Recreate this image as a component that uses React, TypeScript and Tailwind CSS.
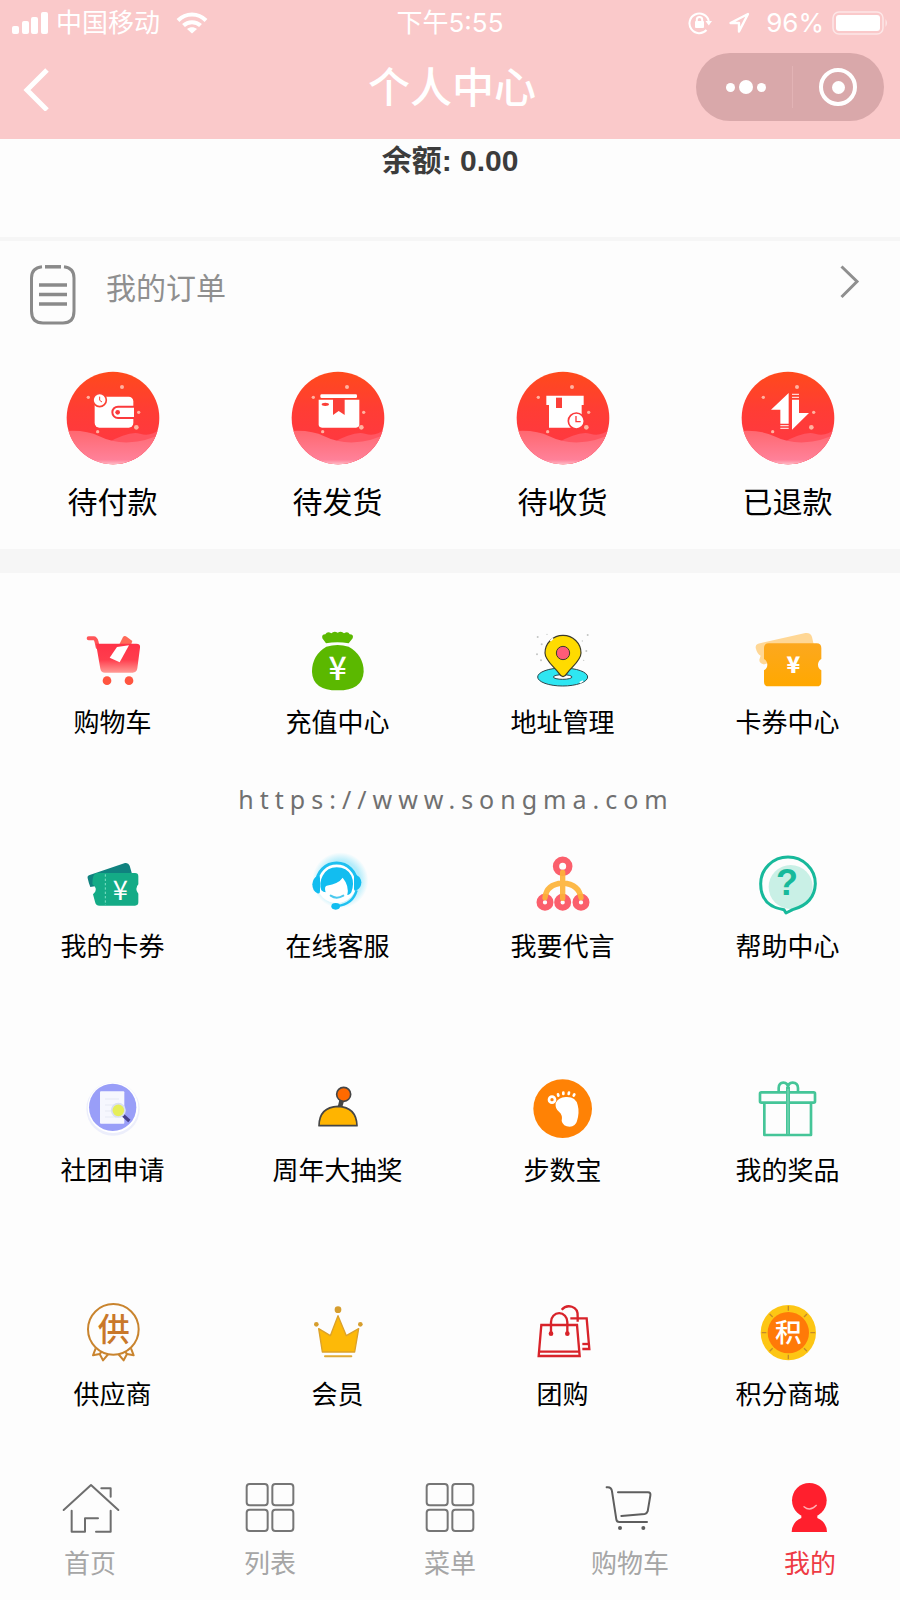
import type { ReactNode } from "react";

type Item = {
  label: string;
  icon: ReactNode;
};

const ICON_FONT = "'Noto Sans CJK SC', 'Noto Sans', sans-serif";

/* ---------- status bar ---------- */

function SignalIcon() {
  return (
    <svg width="36" height="22" viewBox="0 0 36 22" fill="currentColor" aria-hidden="true">
      <rect x="0" y="14" width="7" height="8" rx="2" />
      <rect x="10" y="9" width="7" height="13" rx="2" />
      <rect x="19" y="5" width="7" height="17" rx="2" />
      <rect x="29" y="0" width="7" height="22" rx="2" />
    </svg>
  );
}

function WifiIcon() {
  return (
    <svg width="32" height="22" viewBox="0 0 32 22" fill="none" stroke="currentColor" strokeWidth="4" aria-hidden="true">
      <path d="M2 8.500C10 0.500 22 0.500 30 8.500" />
      <path d="M7.500 13.500C12 9 20 9 24.500 13.500" />
      <path d="M11 17C14 14.500 18 14.500 21 17L16 21.500Z" fill="currentColor" stroke="none" />
    </svg>
  );
}

function RotationLockIcon() {
  return (
    <svg width="24" height="24" viewBox="0 0 24 24" fill="none" stroke="currentColor" strokeWidth="2" aria-hidden="true">
      <path d="M18.500 19A9.800 9.800 0 1 1 20.800 10" />
      <path d="M17.500 10H24L20.800 14.500Z" fill="currentColor" stroke="none" />
      <rect x="7" y="10" width="9" height="7" rx="1" fill="currentColor" stroke="none" />
      <path d="M8.800 11V8.600a2.700 2.700 0 0 1 5.400 0V11" />
    </svg>
  );
}

function LocationIcon() {
  return (
    <svg width="22" height="22" viewBox="0 0 22 22" fill="none" stroke="currentColor" strokeWidth="2.400" strokeLinejoin="round" aria-hidden="true">
      <path d="M20 2L2.500 11H11V19.500Z" />
    </svg>
  );
}

function BatteryIcon() {
  return (
    <svg width="56" height="24" viewBox="0 0 56 24" fill="none" aria-hidden="true">
      <rect x="1" y="1" width="50" height="22" rx="6" stroke="#fff" strokeOpacity="0.550" strokeWidth="1.500" />
      <rect x="4" y="4" width="44" height="16" rx="3" fill="#fff" />
      <path d="M53.500 8q3 4 0 8z" fill="#fff" fillOpacity="0.550" />
    </svg>
  );
}

/* ---------- order status icons ---------- */

function OrderBadge({ id, children }: { id: string; children: ReactNode }) {
  return (
    <svg width="94" height="94" viewBox="0 0 282 282" aria-hidden="true">
      <defs>
        <linearGradient id={`${id}-bg`} x1="0" y1="0" x2="0" y2="1">
          <stop offset="0" stopColor="#ff4a1c" />
          <stop offset="0.400" stopColor="#ff3d34" />
          <stop offset="1" stopColor="#ff3548" />
        </linearGradient>
        <linearGradient id={`${id}-wave`} x1="0" y1="0" x2="0" y2="1">
          <stop offset="0" stopColor="#ff6870" />
          <stop offset="0.850" stopColor="#ff8199" />
          <stop offset="1" stopColor="#ffc4cd" />
        </linearGradient>
        <clipPath id={`${id}-clip`}>
          <circle cx="141" cy="141" r="139" />
        </clipPath>
      </defs>
      <circle cx="141" cy="141" r="139" fill={`url(#${id}-bg)`} />
      <g clipPath={`url(#${id}-clip)`}>
        <path d="M120 218Q190 178 222 188T282 174V282H120Z" fill="#ff5561" />
        <path d="M0 180Q60 176 100 196T190 214Q240 212 282 190V282H0Z" fill={`url(#${id}-wave)`} />
      </g>
      <g fill="#ffb3a0">
        <circle cx="168" cy="48" r="6" />
        <circle cx="67" cy="79" r="5" />
        <circle cx="218" cy="124" r="5" />
        <circle cx="211" cy="169" r="7" />
        <circle cx="95" cy="182" r="5" />
      </g>
      {children}
    </svg>
  );
}

function WalletBadge() {
  return (
    <OrderBadge id="wallet">
      <rect x="86" y="77" width="116" height="93" rx="14" fill="#fff" />
      <path d="M204 107H156a17 17 0 0 0 0 34H204" fill="#fff" stroke="#fb3a3c" strokeWidth="6" />
      <circle cx="155" cy="124" r="7" fill="#fb3a3c" />
      <circle cx="101" cy="87" r="20" fill="#fff" stroke="#fb4434" strokeWidth="5" />
      <path d="M101 77V88L108 93" fill="none" stroke="#fb4434" strokeWidth="3" />
    </OrderBadge>
  );
}

function PackageBadge() {
  return (
    <OrderBadge id="package">
      <rect x="88" y="70" width="110" height="11" rx="4" fill="#fff" />
      <path d="M83 86H205V160a10 10 0 0 1-10 10H93a10 10 0 0 1-10-10Z" fill="#fff" />
      <path d="M126 84H161V132L143 120L126 132Z" fill="#fb3f38" />
      <ellipse cx="103" cy="100" rx="11" ry="5" fill="#fb3f38" />
    </OrderBadge>
  );
}

function ReceiveBadge() {
  return (
    <OrderBadge id="receive">
      <path d="M91 74H203V102H197V170H99V102H91Z" fill="#fff" />
      <rect x="120" y="80" width="18" height="31" fill="#fb3f38" />
      <circle cx="181" cy="150" r="24" fill="#fff" stroke="#fb3a3c" strokeWidth="5" />
      <path d="M180 135V152H194" fill="none" stroke="#fb3a3c" strokeWidth="4" />
    </OrderBadge>
  );
}

function RefundBadge() {
  return (
    <OrderBadge id="refund">
      <g fill="#fff">
        <path d="M143 66V158H118V116H90Z" />
        <path d="M153 176V86H174V126H204Z" />
      </g>
      <g stroke="#fff" strokeWidth="4" opacity="0.800">
        <path d="M118 164H143M118 172H143M153 70H174M153 79H174" />
      </g>
    </OrderBadge>
  );
}

/* ---------- service icons ---------- */

function ServiceSvg({ children }: { children: ReactNode }) {
  return (
    <svg className="overflow-visible" width="60" height="60" viewBox="0 0 180 180" fill="none" aria-hidden="true">
      {children}
    </svg>
  );
}

function CartIcon() {
  return (
    <ServiceSvg>
      <defs>
        <linearGradient id="cart-body" x1="0" y1="0" x2="0" y2="1">
          <stop offset="0" stopColor="#ff3247" />
          <stop offset="0.550" stopColor="#ff3d4d" />
          <stop offset="1" stopColor="#ff9a95" />
        </linearGradient>
      </defs>
      <path d="M108 42L120 18Q125 12 132 18L148 30L144 42Z" fill="#ff6a58" />
      <path d="M17 22H32Q38 22 41 34L44 48" stroke="#ff5558" strokeWidth="12" strokeLinecap="round" />
      <path d="M39 38H160Q173 38 171 50L163 112Q161 125 149 125H66Q54 125 52 113Z" fill="url(#cart-body)" />
      <path d="M102 48L138 43L110 94L80 80Z" fill="#fff" />
      <circle cx="72" cy="149" r="13" fill="#ff5540" />
      <circle cx="138" cy="149" r="13" fill="#ff5540" />
    </ServiceSvg>
  );
}

function MoneyBagIcon() {
  return (
    <ServiceSvg>
      <path d="M54 37L43 22Q40 10 52 10Q58 0 70 7Q78 -2 89 5Q100 -2 108 7Q120 0 125 10Q138 10 134 22L122 37Q88 30 54 37Z" fill="#5bb800" />
      <path d="M55 47Q89 37 122 47Q167 72 167 122Q164 178 89 178Q14 178 12 122Q12 72 55 47Z" fill="#5bb800" />
      <text x="89" y="147" textAnchor="middle" fontSize="96" fontWeight="500" fontFamily={ICON_FONT} fill="#fff">¥</text>
    </ServiceSvg>
  );
}

function AddressIcon() {
  return (
    <ServiceSvg>
      <g fill="#c3c6c4">
        <circle cx="14" cy="18" r="3" />
        <circle cx="42" cy="10" r="2" />
        <circle cx="26" cy="40" r="3" />
        <circle cx="12" cy="70" r="3" />
        <circle cx="24" cy="88" r="3" />
        <circle cx="164" cy="12" r="3" />
        <circle cx="148" cy="30" r="2" />
        <circle cx="160" cy="60" r="3" />
        <circle cx="152" cy="88" r="2" />
      </g>
      <ellipse cx="89" cy="138" rx="75" ry="27" fill="#2ee6f2" stroke="#29464c" strokeWidth="3" />
      <ellipse cx="89" cy="138" rx="28" ry="7" fill="#fff" stroke="#29464c" strokeWidth="3" />
      <path d="M90 137Q84 137 78 127C62 106 36 88 36 66A54 53 0 0 1 144 66C144 88 118 106 102 127Q96 137 90 137Z" fill="#ffdb00" stroke="#3b3a28" strokeWidth="3.500" />
      <circle cx="90" cy="66" r="20" fill="#ff5c78" stroke="#3b3a28" strokeWidth="3" />
      <path d="M52 30L60 22M140 155L150 150" stroke="#fff" strokeWidth="5" />
    </ServiceSvg>
  );
}

function CouponCenterIcon() {
  return (
    <ServiceSvg>
      <defs>
        <linearGradient id="coupon-front" x1="0" y1="0" x2="0" y2="1">
          <stop offset="0" stopColor="#fca81f" />
          <stop offset="1" stopColor="#ffa800" />
        </linearGradient>
      </defs>
      <path d="M0 38L142 6Q158 4 162 18L168 44L20 100Q4 98 4 86L8 74Q-2 70 -6 54Q-10 42 0 38Z" fill="#ffd795" />
      <path d="M32 37H176Q190 37 190 51V84Q180 90 180 101Q180 112 190 118V152Q190 166 176 166H32Q18 166 18 152V118Q28 112 28 101Q28 90 18 84V51Q18 37 32 37Z" fill="url(#coupon-front)" />
      <text x="106" y="125" textAnchor="middle" fontSize="68" fontWeight="900" fontFamily={ICON_FONT} fill="#fff">¥</text>
    </ServiceSvg>
  );
}

function MyCouponIcon() {
  return (
    <ServiceSvg>
      <path d="M20 60L126 24Q136 22 140 32L148 60L44 92L22 96Q18 88 14 70Q12 62 20 60Z" fill="#10827f" />
      <path d="M42 54H156Q166 54 166 64V88Q160 94 160 102Q160 110 166 116V142Q166 152 156 152H50Q38 152 36 140L30 118Q40 110 38 100Q36 92 28 88Q28 54 42 54Z" fill="#14ab86" />
      <path d="M67 58V150" stroke="#7fe0c4" strokeWidth="3" strokeDasharray="7 6" />
      <text x="112" y="134" textAnchor="middle" fontSize="82" fontWeight="400" fontFamily={ICON_FONT} fill="#fff">¥</text>
    </ServiceSvg>
  );
}

function SupportIcon() {
  return (
    <ServiceSvg>
      <defs>
        <radialGradient id="support-glow">
          <stop offset="0.700" stopColor="#b5edfb" />
          <stop offset="1" stopColor="#b5edfb" stopOpacity="0" />
        </radialGradient>
      </defs>
      <circle cx="97" cy="76" r="84" fill="url(#support-glow)" />
      <circle cx="86" cy="84" r="60" fill="#fff" />
      <path d="M26 84A60 60 0 0 1 146 84" stroke="#1ec0f0" strokeWidth="9" />
      <path d="M40 106Q32 84 44 62Q58 37 86 37Q116 37 130 62Q140 84 130 112Q124 122 118 120Q124 92 104 68Q92 86 56 92Q48 94 53 112Q46 112 40 106Z" fill="#12bdf0" />
      <path d="M30 62Q36 60 36 70V108Q36 118 28 115Q13 108 13 88Q14 68 30 62Z" fill="#12bdf0" />
      <path d="M144 60Q138 60 138 70V102Q138 110 146 106Q160 98 160 82Q158 64 144 60Z" fill="#12bdf0" />
      <path d="M146 106Q134 148 88 153" stroke="#1ec0f0" strokeWidth="7" />
      <ellipse cx="83" cy="154" rx="13" ry="10" fill="#12bdf0" />
      <path d="M68 122Q86 134 106 122" stroke="#4cc9ee" strokeWidth="6" strokeLinecap="round" />
    </ServiceSvg>
  );
}

function SpokesmanIcon() {
  return (
    <ServiceSvg>
      <g stroke="#fb5f6c" strokeWidth="19">
        <circle cx="89" cy="34" r="20" />
        <circle cx="36" cy="142" r="16" />
        <circle cx="89" cy="142" r="16" />
        <circle cx="144" cy="142" r="16" />
      </g>
      <path d="M36 128Q40 88 89 84Q138 88 144 128M89 52V130" stroke="#fdb338" strokeWidth="16" strokeLinecap="round" opacity="0.920" />
    </ServiceSvg>
  );
}

function HelpIcon() {
  return (
    <ServiceSvg>
      <circle cx="98" cy="96" r="66" fill="#c9f0e6" />
      <path d="M78 164Q8 154 8 86A82 80 0 0 1 172 86Q170 146 104 164L84 174Z" stroke="#17b99b" strokeWidth="9" strokeLinejoin="round" />
      <text x="87" y="121" textAnchor="middle" fontSize="108" fontWeight="700" fontFamily="'Liberation Sans', sans-serif" fill="#17b99b">?</text>
    </ServiceSvg>
  );
}

function ClubIcon() {
  return (
    <ServiceSvg>
      <circle cx="90" cy="90" r="80" fill="#eceefb" />
      <circle cx="90" cy="86" r="76" fill="#fff" />
      <circle cx="89" cy="85" r="71" fill="#999ef8" />
      <rect x="51" y="37" width="73" height="97" rx="3" fill="#f6f7fe" />
      <path d="M66 60H108M66 78H96M66 96H84M66 114H100" stroke="#eceef8" strokeWidth="4" />
      <path d="M120 109L139 126" stroke="#46408c" strokeWidth="10" />
      <circle cx="106" cy="94" r="20" fill="#e6ee5a" stroke="#d9dff2" strokeWidth="5" />
    </ServiceSvg>
  );
}

function LotteryIcon() {
  return (
    <ServiceSvg>
      <path d="M101 64L96 84" stroke="#454545" strokeWidth="14" />
      <circle cx="107" cy="46" r="21" fill="#ff6a00" stroke="#454545" strokeWidth="5" />
      <path d="M33 140Q34 84 90 82Q145 84 147 140Z" fill="#ffb400" stroke="#454545" strokeWidth="5" strokeLinejoin="round" />
    </ServiceSvg>
  );
}

function StepsIcon() {
  return (
    <ServiceSvg>
      <circle cx="89" cy="89" r="88" fill="#ff8205" />
      <circle cx="57" cy="62" r="9" stroke="#fff" strokeWidth="8" />
      <path d="M68 72Q76 56 98 54Q128 52 134 78Q140 100 132 126Q128 142 110 143Q90 143 86 126Q90 108 78 98Q66 90 68 72Z" fill="#fff" />
      <g stroke="#fff" strokeWidth="8" strokeLinecap="round">
        <path d="M76 50L75 46M91 45V41M107 45L108 41M122 50L124 46" />
      </g>
    </ServiceSvg>
  );
}

function PrizeIcon() {
  return (
    <ServiceSvg>
      <g stroke="#45c598" strokeWidth="8">
        <rect x="6" y="40" width="165" height="31" rx="4" />
        <path d="M19 71V168H159V71" strokeLinejoin="round" />
        <path d="M62 38V27Q63 11 76 11Q90 11 90 27Q90 11 104 11Q119 11 120 27V38" />
      </g>
      <path d="M90 24V169" stroke="#45c598" strokeWidth="12" />
      <path d="M90 30V165" stroke="#a9e6cf" strokeWidth="2" />
    </ServiceSvg>
  );
}

function SupplierIcon() {
  return (
    <ServiceSvg>
      <g stroke="#c9842e" strokeWidth="6" strokeLinejoin="round">
        <circle cx="91" cy="79" r="76" />
        <path d="M38 136L30 157L50 153L60 172L76 153" />
        <path d="M144 136L152 157L132 153L122 172L106 153" />
        <path d="M50 153L56 146M132 153L126 146" />
      </g>
      <text x="92" y="114" textAnchor="middle" fontSize="96" fontWeight="500" fontFamily={ICON_FONT} fill="#c9782a">供</text>
    </ServiceSvg>
  );
}

function MemberIcon() {
  return (
    <ServiceSvg>
      <path d="M32 77L67 98L90 38L115 98L152 77L140 147H43Z" fill="#fdb908" stroke="#dba12a" strokeWidth="4" strokeLinejoin="round" />
      <g fill="#d69e2e">
        <circle cx="90" cy="20" r="10" />
        <circle cx="25" cy="64" r="7" />
        <circle cx="157" cy="64" r="7" />
      </g>
      <path d="M51 160H130" stroke="#e0aa35" strokeWidth="6" strokeLinecap="round" />
    </ServiceSvg>
  );
}

function GroupBuyIcon() {
  return (
    <ServiceSvg>
      <g stroke="#d8232a" strokeWidth="7">
        <path d="M25 66H132L140 159H17Z" />
        <path d="M19 146H138" />
        <path d="M54 90V57A24 26 0 0 1 103 57V90" />
        <path d="M86 20C102 2 136 8 134 40V56" />
        <path d="M112 46H161L169 138H148" />
        <path d="M148 123H167" />
      </g>
      <g fill="#d8232a">
        <circle cx="54" cy="92" r="7" />
        <circle cx="103" cy="92" r="7" />
      </g>
    </ServiceSvg>
  );
}

function PointsIcon() {
  return (
    <ServiceSvg>
      <circle cx="91" cy="89" r="83" fill="#fdc614" />
      <path d="M91 9V23M91 155V169M11 89H25M157 89H171M35 33L44 42M138 136L147 145M147 33L138 42M44 136L35 145" stroke="#c48a2a" strokeWidth="4" />
      <circle cx="91" cy="89" r="62" fill="#ff7a08" />
      <text x="91" y="117" textAnchor="middle" fontSize="80" fontWeight="500" fontFamily={ICON_FONT} fill="#fff">积</text>
    </ServiceSvg>
  );
}

/* ---------- tab bar icons ---------- */

function HomeTabIcon() {
  return (
    <ServiceSvg>
      <g stroke="#6e6e6e" strokeWidth="6" strokeLinecap="round" strokeLinejoin="round">
        <path d="M11 90L93 15L175 90" />
        <path d="M124 25H152V50" />
        <path d="M35 92V155H75V115H114" />
        <path d="M152 92V155H108" />
      </g>
    </ServiceSvg>
  );
}

function GridTabIcon() {
  return (
    <ServiceSvg>
      <g stroke="#767676" strokeWidth="6">
        <rect x="20" y="12" width="63" height="64" rx="9" />
        <rect x="97" y="12" width="63" height="64" rx="9" />
        <rect x="20" y="89" width="63" height="64" rx="9" />
        <rect x="97" y="89" width="63" height="64" rx="9" />
      </g>
    </ServiceSvg>
  );
}

function CartTabIcon() {
  return (
    <ServiceSvg>
      <g stroke="#5e5e5e" strokeWidth="6" strokeLinecap="round" strokeLinejoin="round">
        <path d="M20 22Q34 20 36 34L49 118Q50 126 58 126H141" />
        <path d="M54 37H144Q153 37 151 47L143 94Q141 101 134 102L64 108" />
      </g>
      <circle cx="60" cy="144" r="6" fill="#5e5e5e" />
      <circle cx="130" cy="144" r="6" fill="#5e5e5e" />
    </ServiceSvg>
  );
}

function MineTabIcon() {
  return (
    <ServiceSvg>
      <circle cx="88" cy="61" r="52" fill="#ff1f2d" />
      <path d="M64 106H112V114Q140 126 141 156H35Q36 126 64 114Z" fill="#ff1f2d" />
      <path d="M72 80Q90 96 109 76" stroke="#ffb0b4" strokeWidth="4" strokeLinecap="round" />
    </ServiceSvg>
  );
}

/* ---------- data ---------- */

const orders: Item[] = [
  { label: "待付款", icon: <WalletBadge /> },
  { label: "待发货", icon: <PackageBadge /> },
  { label: "待收货", icon: <ReceiveBadge /> },
  { label: "已退款", icon: <RefundBadge /> },
];

const services: Item[] = [
  { label: "购物车", icon: <CartIcon /> },
  { label: "充值中心", icon: <MoneyBagIcon /> },
  { label: "地址管理", icon: <AddressIcon /> },
  { label: "卡券中心", icon: <CouponCenterIcon /> },
  { label: "我的卡券", icon: <MyCouponIcon /> },
  { label: "在线客服", icon: <SupportIcon /> },
  { label: "我要代言", icon: <SpokesmanIcon /> },
  { label: "帮助中心", icon: <HelpIcon /> },
  { label: "社团申请", icon: <ClubIcon /> },
  { label: "周年大抽奖", icon: <LotteryIcon /> },
  { label: "步数宝", icon: <StepsIcon /> },
  { label: "我的奖品", icon: <PrizeIcon /> },
  { label: "供应商", icon: <SupplierIcon /> },
  { label: "会员", icon: <MemberIcon /> },
  { label: "团购", icon: <GroupBuyIcon /> },
  { label: "积分商城", icon: <PointsIcon /> },
];

const tabs: (Item & { active?: boolean })[] = [
  { label: "首页", icon: <HomeTabIcon /> },
  { label: "列表", icon: <GridTabIcon /> },
  { label: "菜单", icon: <GridTabIcon /> },
  { label: "购物车", icon: <CartTabIcon /> },
  { label: "我的", icon: <MineTabIcon />, active: true },
];

/* ---------- sections ---------- */

function Header() {
  return (
    <header className="bg-[#fac9ca] pb-[18px] text-white">
      <div className="grid h-[45px] grid-cols-[1fr_auto_1fr] items-center px-3 font-[Inter,'Noto_Sans_CJK_SC',sans-serif] text-[26px] leading-[32px]">
        <div className="flex items-center gap-2">
          <SignalIcon />
          <span>中国移动</span>
          <span className="pl-2">
            <WifiIcon />
          </span>
        </div>
        <span>下午5:55</span>
        <div className="flex items-center justify-end gap-2">
          <RotationLockIcon />
          <span className="px-2">
            <LocationIcon />
          </span>
          <span>96%</span>
          <BatteryIcon />
        </div>
      </div>

      <div className="grid grid-cols-[1fr_auto_1fr] items-center pt-2 pr-4 pl-5">
        <button type="button" aria-label="返回" className="justify-self-start">
          <svg width="32" height="48" viewBox="0 0 32 48" fill="none" stroke="currentColor" strokeWidth="5" aria-hidden="true">
            <path d="M27 7L7 27L27 47" />
          </svg>
        </button>
        <h1 className="pt-1 text-[42px] leading-[56px] font-medium">个人中心</h1>
        <div className="flex h-[68px] w-[188px] items-center justify-self-end rounded-full bg-[#d9a8aa]">
          <button type="button" aria-label="更多" className="flex h-full flex-1 items-center justify-center gap-1 pl-1">
            <span className="size-[9px] rounded-full bg-white" />
            <span className="size-[14px] rounded-full bg-white" />
            <span className="size-[9px] rounded-full bg-white" />
          </button>
          <span className="h-[42px] w-px bg-[#e2b3b5]" />
          <button type="button" aria-label="关闭" className="flex h-full flex-1 items-center justify-center">
            <span className="flex size-[38px] items-center justify-center rounded-full border-4 border-white">
              <span className="size-[13px] rounded-full bg-white" />
            </span>
          </button>
        </div>
      </div>
    </header>
  );
}

function Orders() {
  return (
    <section className="border-t-4 border-b-[24px] border-[#f6f6f6] pt-6 pb-[26px]">
      <a href="#orders" className="flex items-start pr-10 pl-[30px]">
        <svg width="46" height="60" viewBox="0 0 46 60" fill="none" stroke="#8a8a8a" aria-hidden="true">
          <path d="M12 1.800Q1.500 3 1.500 13V46Q1.500 58 13 58H33Q44 58 44 46V13Q44 3 34 1.800" strokeWidth="3" />
          <path d="M15 1.800H31" strokeWidth="3.500" />
          <path d="M9 20H37M9 29.500H37M9 39H37" strokeWidth="3.500" />
        </svg>
        <span className="flex-1 pt-1 pl-[30px] text-[30px] leading-[40px] text-[#8f8f8f]">我的订单</span>
        <svg width="20" height="34" viewBox="0 0 20 34" fill="none" stroke="#8f8f8f" strokeWidth="3" aria-hidden="true">
          <path d="M1.500 1.500L17 16.500L1.500 32" />
        </svg>
      </a>
      <ul className="grid grid-cols-4 pt-[46px]">
        {orders.map((item) => (
          <li key={item.label}>
            <a href="#order-list" className="flex flex-col items-center gap-[18px] text-[30px] leading-[40px] text-black">
              {item.icon}
              <span>{item.label}</span>
            </a>
          </li>
        ))}
      </ul>
    </section>
  );
}

function Services() {
  return (
    <section className="relative pt-[58px] pb-12">
      <ul className="grid grid-cols-4 gap-y-[114px]">
        {services.map((item) => (
          <li key={item.label}>
            <a href="#service" className="flex flex-col items-center gap-[14px] text-[26px] leading-[36px] text-black">
              {item.icon}
              <span>{item.label}</span>
            </a>
          </li>
        ))}
      </ul>
      {/* site mark laid over the first gap between rows */}
      <a
        href="#site"
        className="absolute inset-x-0 top-[208px] pl-3 text-center font-['Noto_Sans'] text-[25px] leading-[36px] tracking-[6px] text-[#707070]"
      >
        https://www.songma.com
      </a>
    </section>
  );
}

function TabBar() {
  return (
    <nav className="mt-auto pt-3 pb-5">
      <ul className="grid grid-cols-5">
        {tabs.map((tab) => (
          <li key={tab.label}>
            <a
              href="#tab"
              aria-current={tab.active ? "page" : undefined}
              className={`flex flex-col items-center gap-2 text-[26px] leading-[32px] ${
                tab.active ? "text-[#ee3a44]" : "text-[#a6a6a6]"
              }`}
            >
              {tab.icon}
              <span>{tab.label}</span>
            </a>
          </li>
        ))}
      </ul>
    </nav>
  );
}

export default function App() {
  return (
    <div className="flex min-h-screen flex-col bg-[#fdfdfd] font-['Liberation_Sans','Noto_Sans_CJK_SC',sans-serif]">
      <Header />
      <main>
        <p className="pb-[54px] text-center text-[30px] leading-[44px] font-bold text-[#3c3c3c]">
          余额: 0.00
        </p>
        <Orders />
        <Services />
      </main>
      <TabBar />
    </div>
  );
}
